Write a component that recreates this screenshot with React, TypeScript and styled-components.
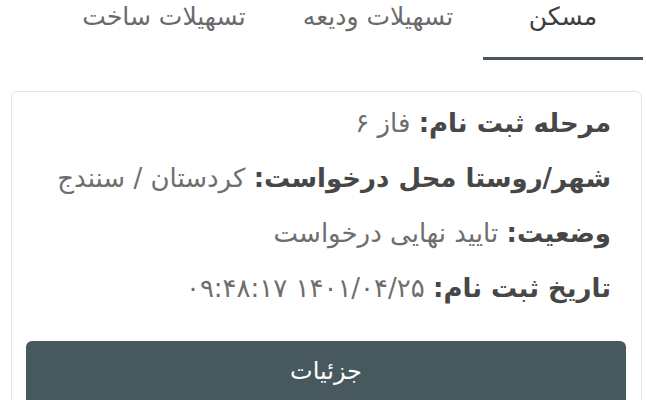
import React from 'react'
import styled, { createGlobalStyle } from 'styled-components'

const GlobalStyle = createGlobalStyle`
  html, body {
    margin: 0;
    padding: 0;
    background: #ffffff;
  }
  body {
    font-family: "DejaVu Sans", "Noto Sans", sans-serif;
  }
`

const Page = styled.div`
  direction: rtl;
  width: 646px;
  height: 400px;
  overflow: hidden;
  background: #fff;
`

const TabBar = styled.nav`
  display: flex;
  height: 60px;
  padding-right: 3px;
`

const Tab = styled.button<{ $active?: boolean; $width: number }>`
  width: ${({ $width }) => $width}px;
  height: 60px;
  border: none;
  background: none;
  padding: 0 0 24px;
  font-family: inherit;
  font-size: 25px;
  color: ${({ $active }) => ($active ? '#3d3d3d' : '#6a6a6a')};
  border-bottom: 3px solid ${({ $active }) => ($active ? '#46575f' : 'transparent')};
  display: flex;
  align-items: center;
  justify-content: center;
  white-space: nowrap;
`

const Card = styled.section`
  margin: 31px 4px 0 11px;
  border: 1px solid #e4e4e4;
  border-radius: 6px;
  padding: 4px 30px 0 15px;
`

const Row = styled.p`
  margin: 0;
  height: 55px;
  line-height: 55px;
  font-size: 26px;
  color: #6e6e6e;
  white-space: nowrap;
`

const Label = styled.span`
  font-weight: bold;
  color: #474747;
`

const DetailsBtn = styled.button`
  display: block;
  width: 600px;
  height: 64px;
  margin: 25px -15px 0 0;
  border: none;
  border-radius: 6px;
  background: #47585f;
  color: #fff;
  font-family: inherit;
  font-size: 24px;
  padding-bottom: 6px;
`

const rows = [
  { label: 'مرحله ثبت نام:', value: 'فاز ۶' },
  { label: 'شهر/روستا محل درخواست:', value: 'کردستان / سنندج' },
  { label: 'وضعیت:', value: 'تایید نهایی درخواست' },
  { label: 'تاریخ ثبت نام:', value: '۱۴۰۱/۰۴/۲۵ ۰۹:۴۸:۱۷' },
]

export default function App() {
  return (
    <Page>
      <GlobalStyle />
      <TabBar>
        <Tab $active $width={160}>مسکن</Tab>
        <Tab $width={210}>تسهیلات ودیعه</Tab>
        <Tab $width={218}>تسهیلات ساخت</Tab>
      </TabBar>
      <Card>
        {rows.map((r) => (
          <Row key={r.label}>
            <Label>{r.label}</Label> {r.value}
          </Row>
        ))}
        <DetailsBtn>جزئیات</DetailsBtn>
      </Card>
    </Page>
  )
}
